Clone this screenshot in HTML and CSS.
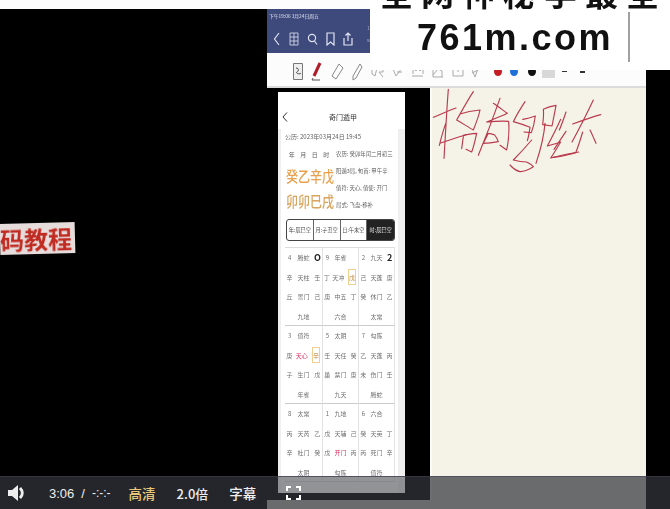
FILE: index.html
```html
<!DOCTYPE html>
<html lang="zh-CN">
<head>
    <meta charset="UTF-8">
    <title>奇门遁甲教程</title>
    <link rel="stylesheet" href="styles.css">
</head>
<body>
    <div class="player">
        <div class="top-strip"></div>
        <div class="frame">
            <div class="left-pane">
                <div class="caption">码教程</div>
            </div>
            <div class="tablet">
                <div class="status-bar">
                    <div class="status-time">下午19:06 3月24日周五</div>
                    <div class="status-icons">
                        <svg width="8" height="14" viewBox="0 0 8 14"><path d="M6 1 1.500 7 6 13" class="line"/></svg>
                        <svg width="10" height="14" viewBox="0 0 10 14"><path d="M1 1h8v12H1zM1 5h8M1 9h8M5 1v12" class="line thin"/></svg>
                        <svg width="11" height="14" viewBox="0 0 11 14"><circle cx="5" cy="6" r="3.600" class="line"/><path d="m7.500 9 2.500 3.500" class="line"/></svg>
                        <svg width="9" height="14" viewBox="0 0 9 14"><path d="M1 1h7v12L4.500 10 1 13z" class="line"/></svg>
                        <svg width="10" height="14" viewBox="0 0 10 14"><path d="M1 6v7h8V6M5 9V1M2.500 3.500 5 1l2.500 2.500" class="line"/></svg>
                        <span class="status-faint">13<br>www</span>
                    </div>
                </div>
                <div class="toolbar">
                    <svg width="10" height="17" viewBox="0 0 10 17"><path d="M.5.500h9v16h-9z" fill="#eee" stroke="#777"/><path d="M3 5c3 0 3 3 1 4s3 3 4 1" fill="none" stroke="#444"/></svg>
                    <svg width="11" height="19" viewBox="0 0 11 19"><path d="M9 1 3 14" stroke="#b01c28" stroke-width="3"/><path d="M2 16l-1 2h8" stroke="#555" fill="none"/></svg>
                    <svg width="14" height="18" viewBox="0 0 14 18"><path d="M9 1l4 4-7 11-4-3z" class="tool"/></svg>
                    <svg width="11" height="18" viewBox="0 0 11 18"><path d="M8 1l2 3-6 11-3 2 0-4z" class="tool"/></svg>
                    <svg width="13" height="12" viewBox="0 0 13 12"><path d="M1 2v6l3 2 2-8M8 2h4v4H8l4 5" class="tool light"/></svg>
                    <svg width="11" height="12" viewBox="0 0 11 12"><path d="M1 3l3 7 6-8M5 6h5" class="tool light"/></svg>
                    <svg width="13" height="12" viewBox="0 0 13 12"><path d="M1 10h11M2 8V2l3 3 2-3 2 3 3-3v6" class="tool light"/></svg>
                    <svg width="12" height="12" viewBox="0 0 12 12"><path d="M1 2v9h10M1 9l5-6 4 2v6" class="tool light"/></svg>
                    <svg width="12" height="12" viewBox="0 0 12 12"><path d="M1 3v7h10V3M6 2v4" class="tool light"/></svg>
                    <svg class="tool-last" width="10" height="13" viewBox="0 0 10 13"><path d="M1 2l4 10 4-11M2 8l6-3" class="tool light"/></svg>
                    <span class="dot dot-red"></span>
                    <span class="dot dot-blue"></span>
                    <span class="dot dot-black"></span>
                    <span class="swatch"></span>
                    <span class="dash"></span>
                    <span class="dash thick"></span>
                </div>
                <div class="workspace">
                    <div class="phone-side">
                        <div class="phone">
                            <div class="phone-title">
                                <svg width="6" height="10" viewBox="0 0 6 10"><path d="M5 .500 1 5l4 4.500" fill="none" stroke="#333"/></svg>
                                <span>奇门遁甲</span>
                            </div>
                            <div class="phone-card">
                                <div class="solar">公历: 2023年03月24日 19:45</div>
                                <div class="pillars">
                                    <div class="pillar-col">
                                        <div class="pillar-head"><span>年</span><span>月</span><span>日</span><span>时</span></div>
                                        <div class="pillar-big">癸乙辛戊</div>
                                        <div class="pillar-big">卯卯巳戌</div>
                                    </div>
                                    <div class="pillar-info">
                                        <div>农历: 癸卯年闰二月初三</div>
                                        <div>阳遁3局, 旬首: 甲午辛</div>
                                        <div>值符: 天心, 值使: 开门</div>
                                        <div>局式: 飞盘-移补</div>
                                    </div>
                                </div>
                                <div class="tabs">
                                    <div class="tab">年:辰巳空</div>
                                    <div class="tab">月:子丑空</div>
                                    <div class="tab">日:午未空</div>
                                    <div class="tab active">时:辰巳空</div>
                                </div>
                                <div class="palace-grid">
                                    <div class="palace">
                                        <div class="p-row"><span>4</span><span>腾蛇</span><span class="ring">O</span></div>
                                        <div class="p-row"><span>辛</span><span>天柱</span><span>壬</span></div>
                                        <div class="p-row"><span>丘</span><span>景门</span><span>己</span></div>
                                        <div class="p-foot">九地</div>
                                    </div>
                                    <div class="palace">
                                        <div class="p-row"><span>9</span><span>年雀</span><span></span></div>
                                        <div class="p-row"><span>丁</span><span>天冲</span><span class="boxed">戊</span></div>
                                        <div class="p-row"><span>庚</span><span>中五</span><span>丁</span></div>
                                        <div class="p-foot">六合</div>
                                    </div>
                                    <div class="palace">
                                        <div class="p-row"><span>2</span><span>九天</span><span class="ring">2</span></div>
                                        <div class="p-row"><span>己</span><span>天蓬</span><span>庚</span></div>
                                        <div class="p-row"><span>癸</span><span>休门</span><span>乙</span></div>
                                        <div class="p-foot">太常</div>
                                    </div>
                                    <div class="palace">
                                        <div class="p-row"><span>3</span><span>值符</span><span></span></div>
                                        <div class="p-row"><span>庚</span><span class="hot">天心</span><span class="boxed">辛</span></div>
                                        <div class="p-row"><span>子</span><span>生门</span><span>戊</span></div>
                                        <div class="p-foot">年雀</div>
                                    </div>
                                    <div class="palace">
                                        <div class="p-row"><span>5</span><span>太阴</span><span></span></div>
                                        <div class="p-row"><span>壬</span><span>天任</span><span>癸</span></div>
                                        <div class="p-row"><span>巢</span><span>禁门</span><span>庚</span></div>
                                        <div class="p-foot">九天</div>
                                    </div>
                                    <div class="palace">
                                        <div class="p-row"><span>7</span><span>勾陈</span><span></span></div>
                                        <div class="p-row"><span>乙</span><span>天蓬</span><span>丙</span></div>
                                        <div class="p-row"><span>未</span><span>伤门</span><span>壬</span></div>
                                        <div class="p-foot">腾蛇</div>
                                    </div>
                                    <div class="palace">
                                        <div class="p-row"><span>8</span><span>太常</span><span></span></div>
                                        <div class="p-row"><span>丙</span><span>天芮</span><span>乙</span></div>
                                        <div class="p-row"><span>辛</span><span>杜门</span><span>癸</span></div>
                                        <div class="p-foot">太阴</div>
                                    </div>
                                    <div class="palace">
                                        <div class="p-row"><span>1</span><span>九地</span><span></span></div>
                                        <div class="p-row"><span>戊</span><span>天辅</span><span>己</span></div>
                                        <div class="p-row"><span>戊</span><span class="hot">开门</span><span>丙</span></div>
                                        <div class="p-foot">勾陈</div>
                                    </div>
                                    <div class="palace">
                                        <div class="p-row"><span>6</span><span>六合</span><span></span></div>
                                        <div class="p-row"><span>癸</span><span>天英</span><span>丁</span></div>
                                        <div class="p-row"><span>丙</span><span>死门</span><span>辛</span></div>
                                        <div class="p-foot">值符</div>
                                    </div>
                                </div>
                            </div>
                        </div>
                    </div>
                    <div class="note">
                        <svg class="handwriting" width="180" height="100" viewBox="0 0 540 300">
                            <path d="M55 28C50 90 46 170 42 235M10 112C30 104 55 92 78 84M30 190C55 180 85 172 108 164M48 128C40 150 34 172 28 196"/>
                            <path d="M130 35C112 62 96 92 80 120C98 130 115 142 130 150C138 130 146 110 150 90C130 92 108 96 90 102M100 170C98 182 97 194 95 206M100 166C112 164 128 160 140 160C136 178 132 198 125 216L108 208"/>
                            <path d="M210 55C190 112 168 170 145 226M190 70C202 78 218 90 232 100C212 110 190 118 170 126C192 124 214 122 236 124C238 150 236 182 230 210L210 196M175 160L160 190C175 190 190 188 205 185C202 176 198 170 194 165C188 162 182 160 175 160"/>
                            <path d="M285 65C272 85 260 105 250 125C268 130 285 136 300 142C298 156 296 170 292 182M305 180C288 200 268 222 250 240C264 244 278 246 290 246C298 250 305 254 310 260C298 268 284 274 270 275C258 272 248 264 240 255"/>
                            <path d="M278 118C292 116 304 112 316 108C314 124 310 142 304 158L282 156M340 88C352 82 366 78 378 76C374 98 370 118 366 138L338 134C340 118 342 102 340 88M345 130C342 168 332 208 318 250"/>
                            <path d="M392 118C380 145 366 172 352 198C366 194 380 190 392 186C382 202 372 220 362 234C392 226 420 220 446 216M408 96C402 114 396 132 388 150M372 208C384 190 396 172 408 154"/>
                            <path d="M490 60C470 102 448 146 426 186M428 132C456 122 484 112 512 104M458 156C452 176 446 196 438 216M480 150C486 162 492 176 498 190M438 218C414 224 392 230 370 232"/>
                        </svg>
                    </div>
                </div>
            </div>
            <div class="right-pane"></div>
        </div>
        <div class="watermark">
            <div class="wm-top">全网神秘学最全</div>
            <div class="wm-url">761m.com</div>
            <div class="wm-bar"></div>
        </div>
        <div class="controls">
            <div class="phone-through"></div>
            <svg class="speaker" width="20" height="18" viewBox="0 0 20 18"><path d="M0 6h4l6-5v16l-6-5H0z" fill="#eee"/><path d="M12 4c3 3 3 7 0 10" fill="none" stroke="#eee" stroke-width="3"/></svg>
            <span class="time">3:06</span>
            <span class="slash">/</span>
            <span class="total">-:-:-</span>
            <span class="ctl gold">高清</span>
            <span class="ctl speed">2.0倍</span>
            <span class="ctl subs">字幕</span>
            <svg class="fullscreen" width="15" height="14" viewBox="0 0 15 14"><path d="M1 5V1h4M10 1h4v4M14 9v4h-4M5 13H1V9" fill="none" stroke="#fff" stroke-width="2"/></svg>
        </div>
    </div>
</body>
</html>
```

FILE: styles.css
```css
* {
    box-sizing: border-box;
}
html, body {
    margin: 0;
    height: 100%;
    background-color: #000;
}
body {
    overflow: hidden;
    font-family: "Noto Sans CJK SC", "Liberation Sans", sans-serif;
}
.player {
    position: relative;
    width: 670px;
    height: 509px;
    overflow: hidden;
    background-color: #000;
}
.top-strip {
    height: 9px;
    background-color: #fdfdfd;
}
.frame {
    display: flex;
    height: 500px;
}
.left-pane {
    width: 267px;
    padding-top: 214px;
}
.caption {
    display: flex;
    justify-content: flex-end;
    width: 75px;
    height: 31px;
    padding-right: 3px;
    overflow: hidden;
    white-space: nowrap;
    background-color: #e6dcdc;
    color: #c02a20;
    font-size: 24px;
    font-weight: 700;
    line-height: 31px;
    transform: rotate(-1.5deg);
    filter: blur(0.5px);
}
.tablet {
    display: flex;
    flex-direction: column;
    width: 379px;
    background-color: #f5f2e7;
}
.right-pane {
    width: 24px;
}

/* top of the tablet */
.status-bar {
    height: 44px;
    background-color: #3f4a7c;
    padding: 3px 0 0 2px;
    filter: blur(0.4px);
}
.status-time {
    color: #dfe3f2;
    font-size: 4.800px;
    line-height: 8px;
    white-space: nowrap;
}
.status-icons {
    display: flex;
    align-items: center;
    gap: 8px;
    margin-top: 11px;
    padding-left: 4px;
}
.status-faint {
    align-self: flex-start;
    margin: -9px 0 0 6px;
    color: #a4acca;
    font-size: 5px;
    line-height: 12px;
    white-space: nowrap;
}
.line {
    fill: none;
    stroke: #dfe3f2;
    stroke-width: 1.2;
}
.line.thin {
    stroke-width: 0.8;
}
.toolbar {
    display: flex;
    align-items: center;
    gap: 8px;
    height: 35px;
    padding: 4px 0 0 26px;
    background-color: #fcfcfc;
    border-bottom: 2px solid #dcdcdc;
    filter: blur(0.4px);
}
.tool {
    fill: none;
    stroke: #888;
}
.tool.light {
    stroke: #aaa;
}
.tool-last {
    margin-left: -2px;
}
.dot {
    width: 8px;
    height: 9px;
    border-radius: 50%;
}
.dot-red {
    margin-left: 6px;
    background-color: #c41e24;
}
.dot-blue {
    background-color: #1f6fd8;
}
.dot-black {
    margin-left: 2px;
    background-color: #111;
}
.swatch {
    width: 13px;
    height: 13px;
    margin-left: -2px;
    background-color: #d8d8d8;
}
.dash {
    width: 5px;
    height: 1px;
    margin-left: -1px;
    background-color: #333;
}
.dash.thick {
    height: 2px;
    margin-left: 5px;
}

/* phone screenshot */
.workspace {
    display: flex;
}
.phone-side {
    width: 163px;
    height: 412px;
    padding: 4px 25px 0 11px;
    background-color: #000;
}
.phone {
    height: 401px;
    background-color: #efefef;
    color: #5c5c5c;
    font-size: 6px;
    filter: blur(0.45px);
    overflow: hidden;
}
.phone-title {
    display: flex;
    align-items: center;
    height: 37px;
    padding: 12px 0 0 4px;
    background-color: #fff;
    color: #333;
    font-size: 7px;
}
.phone-title span {
    margin-left: 41px;
}
.phone-card {
    height: 364px;
    margin: 0 7px 0 3px;
    padding: 0 3px 0 4px;
    background-color: #fff;
}
.solar {
    height: 17px;
    line-height: 16px;
    white-space: nowrap;
}
.pillars {
    display: flex;
    height: 73px;
}
.pillar-col {
    flex: none;
    width: 51px;
    padding-left: 1px;
}
.pillar-head {
    display: flex;
    justify-content: space-around;
    padding: 0 4px 0 0;
    line-height: 17px;
}
.pillar-big {
    height: 25px;
    color: #e8a04c;
    font-size: 12px;
    font-weight: 500;
    line-height: 25px;
    white-space: nowrap;
    transform: scaleY(1.25);
}
.pillar-big + .pillar-big {
    color: #d9a45e;
}
.pillar-info {
    flex: 1;
    font-size: 5.400px;
    white-space: nowrap;
    line-height: 17px;
}
.tabs {
    display: grid;
    grid-template-columns: repeat(4, 1fr);
    height: 22px;
    margin-left: 1px;
    border: 1px solid #444;
    border-radius: 3px;
    overflow: hidden;
}
.tab {
    border-right: 1px solid #666;
    text-align: center;
    font-size: 5.200px;
    line-height: 20px;
    white-space: nowrap;
    color: #444;
}
.tab.active {
    border-right: 0;
    background-color: #222;
    color: #eee;
}
.palace-grid {
    display: grid;
    grid-template-columns: 38px 36px 36px;
    grid-auto-rows: 78px;
    margin-top: 6px;
    border-top: 1px solid #ddd;
}
.palace {
    border-right: 1px solid #e2e2e2;
    border-bottom: 1px solid #ccc;
    color: #707070;
}
.p-row {
    display: grid;
    grid-template-columns: 1fr 2fr 1fr;
    height: 19.500px;
    line-height: 19.500px;
    text-align: center;
    white-space: nowrap;
}
.p-foot {
    height: 19px;
    line-height: 19px;
    text-align: center;
}
.ring {
    color: #222;
    font-size: 9px;
    font-weight: 700;
}
.boxed {
    height: 16px;
    margin: 1px 2px;
    border: 1px solid #f0d090;
    color: #c08a40;
    line-height: 15px;
}
.hot {
    color: #d83060;
}
.note {
    flex: 1;
    background-color: #f5f2e7;
    border-left: 2px solid #fbfaf4;
}
.handwriting {
    display: block;
    margin: -8px 0 0 -2px;
    fill: none;
    stroke: #b83a4c;
    stroke-width: 3.400;
    stroke-linejoin: round;
    stroke-linecap: round;
    filter: blur(0.35px);
}

/* things lying over the video */
.watermark {
    position: absolute;
    top: 0;
    left: 370px;
    width: 300px;
    height: 70px;
    overflow: hidden;
    background-color: #fff;
    color: #111;
    filter: blur(0.5px);
}
.wm-top {
    height: 33px;
    margin-top: -24px;
    padding-left: 10px;
    font-size: 33px;
    font-weight: 700;
    line-height: 33px;
    letter-spacing: 8px;
    white-space: nowrap;
}
.wm-url {
    margin-top: 8px;
    padding-left: 47px;
    font-family: "Liberation Sans", sans-serif;
    font-size: 36px;
    font-weight: 700;
    line-height: 42px;
    letter-spacing: 2.500px;
    white-space: nowrap;
}
.wm-bar {
    position: absolute;
    top: 12px;
    left: 258px;
    width: 2px;
    height: 50px;
    background-color: #a0a0a0;
}
.controls {
    position: absolute;
    left: 0;
    right: 0;
    bottom: 0;
    display: flex;
    align-items: center;
    height: 33px;
    padding-left: 8px;
    background-color: rgba(50, 53, 60, 0.714);
    border-top: 1px solid rgba(70, 60, 80, 0.6);
    color: #eee;
    font-size: 13px;
    font-weight: 500;
    white-space: nowrap;
}
.phone-through {
    position: absolute;
    top: 0;
    left: 278px;
    width: 127px;
    height: 16px;
    background-color: rgba(255, 255, 255, 0.25);
}
.speaker, .fullscreen {
    position: relative;
}
.time {
    margin-left: 21px;
    font-family: "Liberation Sans", sans-serif;
}
.slash {
    margin-left: 7px;
    font-family: "Liberation Sans", sans-serif;
}
.total {
    margin-left: 7px;
    font-family: "Liberation Sans", sans-serif;
    font-size: 12px;
}
.ctl {
    font-size: 13px;
}
.gold {
    margin-left: 18px;
    color: #e8c878;
    font-size: 13.500px;
}
.speed {
    margin-left: 21px;
}
.subs {
    margin-left: 21px;
    font-size: 13.500px;
}
.fullscreen {
    margin-left: 30px;
}
```
